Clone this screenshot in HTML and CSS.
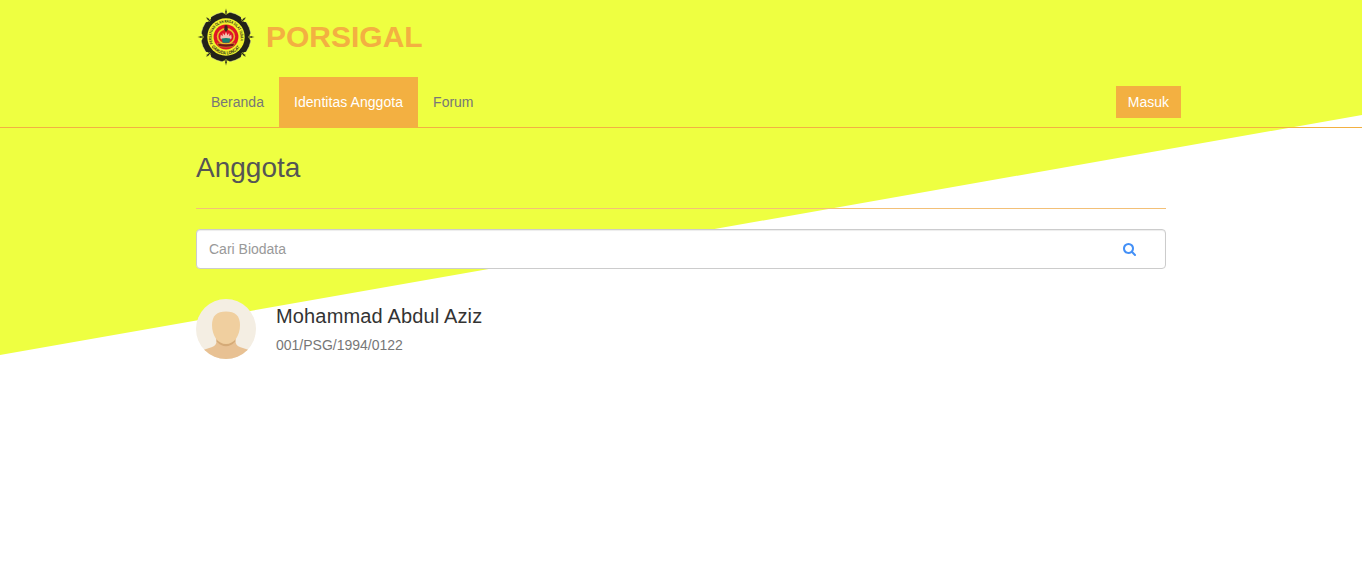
FILE: index.html
```html
<!DOCTYPE html>
<html lang="id">
<head>
<meta charset="utf-8">
<title>Anggota - PORSIGAL</title>
<link rel="stylesheet" href="styles.css">
</head>
<body>
<header class="header">
  <div class="container">
    <a class="brand">
      <svg class="logo" viewBox="-30 -30 60 60" aria-label="Logo">
        <defs>
          <path id="arc-top" d="M-13 6.500A14.500 14.500 0 1 1 13 6.500"/>
          <path id="arc-bottom" d="M-15.200 8.500A17.400 17.400 0 0 0 15.200 8.500"/>
          <g id="notch">
            <path fill="#eeff41" d="M-4.500-26L-2.500-23.800Q0-22.600 2.500-23.800L4.500-26z"/>
            <path fill="#222219" stroke="#eeff41" stroke-width=".4" d="M0-28.400L1-25.500 .6-22.500H-.6L-1-25.500z"/>
          </g>
        </defs>
        <circle r="25" fill="#222219" stroke="#d8dc9c" stroke-width=".5"/>
        <use href="#notch"/><use href="#notch" transform="rotate(45)"/><use href="#notch" transform="rotate(90)"/><use href="#notch" transform="rotate(135)"/><use href="#notch" transform="rotate(180)"/><use href="#notch" transform="rotate(225)"/><use href="#notch" transform="rotate(270)"/><use href="#notch" transform="rotate(315)"/>
        <circle r="18.700" fill="#f1f32c"/>
        <text class="seal"><textPath href="#arc-top" textLength="55" lengthAdjust="spacingAndGlyphs">PERSATUAN OLAH RAGA SILAT INDAH</textPath></text>
        <text class="seal seal-large"><textPath href="#arc-bottom" textLength="33" lengthAdjust="spacingAndGlyphs" startOffset="1.500">GARUDA LONCAT</textPath></text>
        <circle r="12.400" fill="#df1526"/>
        <ellipse cy="-.5" rx="8.400" ry="7.600" fill="none" stroke="#e8bd29" stroke-width="1.600"/>
        <path fill="#39251c" d="M-1.300-11.800H1.300L1.800-7.600 0-5-1.800-7.600z"/>
        <path fill="#f4bcae" d="M-5.700 1.200L-5.200-2.500-3.400-.8-3.200-4.200-1.500-1.700 0-5.200 1.500-1.700 3.200-4.200 3.400-.8 5.200-2.500 5.700 1.200 3 3.200H-3z"/>
        <path fill="#168070" d="M-4.400 1.500Q0 .4 4.400 1.500L3.300 5.800H-3.300z"/>
        <path fill="#6f1718" stroke="#ebca2e" stroke-width=".45" d="M-8.700 6.200Q0 8 8.700 6.200L7.400 9.400Q0 11-7.400 9.400z"/>
      </svg>
      <span class="brand-name">PORSIGAL</span>
    </a>
    <nav class="nav">
      <a class="nav-link">Beranda</a>
      <a class="nav-link active">Identitas Anggota</a>
      <a class="nav-link">Forum</a>
      <a class="login">Masuk</a>
    </nav>
  </div>
</header>
<main class="container">
  <h1 class="title">Anggota</h1>
  <form class="search">
    <input class="search-input" type="text" placeholder="Cari Biodata">
    <svg class="search-icon" viewBox="0 0 1664 1664" aria-hidden="true"><path d="M1152 704q0-185-131.500-316.500T704 256 387.500 387.500 256 704t131.500 316.500T704 1152t316.500-131.500T1152 704zm512 832q0 52-38 90t-90 38q-54 0-90-38l-343-342q-179 124-399 124-143 0-273.500-55.500t-225-150-150-225T0 704t55.500-273.500 150-225 225-150T704 0t273.500 55.500 225 150 150 225T1408 704q0 220-124 399l343 343q37 37 37 90z"/></svg>
  </form>
  <article class="member">
    <svg class="avatar" viewBox="0 0 60 60" aria-hidden="true">
      <defs><clipPath id="round"><circle cx="30" cy="30" r="30"/></clipPath></defs>
      <g clip-path="url(#round)">
        <path fill="#f4eee3" d="M0 0h60v60H0z"/>
        <path fill="#e8c193" d="M20.500 37h19v5q0 5 5 6.200L53 51v9H7v-9l8.500-2.800q5-1.200 5-6.200z"/>
        <path fill="#d5aa77" d="M20.500 38.500h18.800v4Q35 47.200 30 47.200t-9.500-4.700z"/>
        <path fill="#f0cf9f" d="M16 26C16 16.500 21 12.500 30 12.500S44 16.500 44 26C44 37 38 45 30 45S16 37 16 26z"/>
      </g>
    </svg>
    <div>
      <h2 class="member-name">Mohammad Abdul Aziz</h2>
      <p class="member-id">001/PSG/1994/0122</p>
    </div>
  </article>
</main>
</body>
</html>
```
FILE: styles.css
```css
* { box-sizing: border-box; }
html { height: 100%; }
body {
  margin: 0;
  min-height: 100%;
  overflow: hidden;
  background: #fff;
  color: #333;
  font: 14px/20px "Liberation Sans", Arial, sans-serif;
}
/* Slanted colour band behind the page */
body::before {
  content: "";
  position: absolute;
  z-index: -1;
  top: -365px;
  left: 0;
  width: 100%;
  height: 600px;
  background: #eeff41;
  transform: skewY(-10deg);
}
.container { width: 970px; margin: 0 auto; }
.header { border-bottom: 1px solid #f3b041; }
.brand { display: flex; align-items: center; height: 77px; padding-bottom: 3px; }
.logo { width: 60px; height: 60px; }
.brand-name { margin-left: 10px; font-size: 30px; font-weight: bold; line-height: 40px; color: #f3b041; }
.seal { font: bold 4px "Liberation Sans", Arial, sans-serif; fill: #222219; }
.seal-large { font-size: 4.6px; }
.nav { display: flex; align-items: center; height: 50px; margin-right: -15px; }
.nav-link { padding: 15px; color: #777; }
.active { background: #f3b041; color: #fff; letter-spacing: .055px; }
.login { margin-left: auto; padding: 6px 12px; background: #f3b041; color: #fff; }
.title {
  margin: 0 0 20px;
  padding: 20px 0;
  height: 81px;
  border-bottom: 1px solid #f3c077;
  font-size: 28px;
  font-weight: normal;
  line-height: 40px;
  color: #555;
}
.search {
  display: flex;
  align-items: center;
  height: 40px;
  padding: 0 29px 0 12px;
  border: 1px solid #ccc;
  border-radius: 4px;
  background: #fff;
  box-shadow: inset 0 1px 1px rgba(0, 0, 0, .075);
}
.search-input { flex: 1; padding: 0; border: 0; outline: 0; background: transparent; font: inherit; }
.search-input::placeholder { color: #999; }
.search-icon { width: 13px; height: 13px; fill: #4390f7; }
.member { display: flex; gap: 20px; margin-top: 30px; }
.avatar { width: 60px; height: 60px; }
.member-name { margin: 5px 0 7px; font-size: 20px; font-weight: normal; line-height: 24px; letter-spacing: .15px; }
.member-id { margin: 0; color: #777; }
```
